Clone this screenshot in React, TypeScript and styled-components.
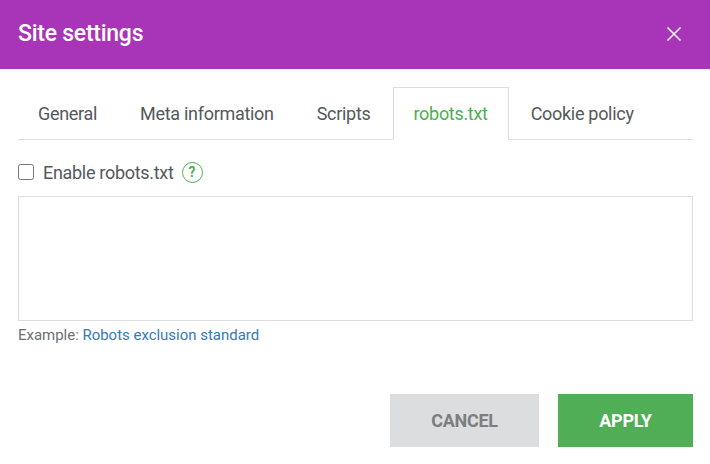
import React from "react";
import styled, { createGlobalStyle } from "styled-components";

const Global = createGlobalStyle`
  html, body { margin: 0; padding: 0; background: #fff; }
  body { font-family: Roboto, "Liberation Sans", sans-serif; }
  * { box-sizing: border-box; }
`;
const Dialog = styled.div`width: 710px; height: 464px; background: #fff; display: flex; flex-direction: column;`;
const Header = styled.header`height: 69px; background: #a835b8; color: #fff; display: flex; align-items: center; justify-content: space-between; padding: 0 28px 2px 18px;`;
const Title = styled.h1`margin: 0; font-size: 23px; font-weight: 500; line-height: 28px; letter-spacing: -0.25px;`;
const Close = styled.button`border: 0; background: none; padding: 0; width: 16px; height: 16px; display: block; color: #fff;`;
const Body = styled.div`flex: 1; padding: 18px 17px 17px 18px; display: flex; flex-direction: column;`;
const Tabs = styled.div`display: flex; align-items: flex-start; height: 53px; border-bottom: 1px solid #ddd;`;
const Tab = styled.div<{ $active?: boolean }>`
  height: ${p => (p.$active ? 53 : 52)}px; padding: 0 20px 0 19px; margin-right: 2px; font-size: 18px; letter-spacing: -0.3px; line-height: 52px; white-space: nowrap;
  color: ${p => (p.$active ? "#4caf50" : "#54585c")};
  background: ${p => (p.$active ? "#fff" : "transparent")};
  border: 1px solid ${p => (p.$active ? "#ddd" : "transparent")};
  border-bottom: ${p => (p.$active ? "1px solid #fff" : "0")};
`;
const CheckRow = styled.label`display: flex; align-items: center; margin-top: 20px; height: 24px; font-size: 18px; letter-spacing: -0.3px; color: #54585c;`;
const Box = styled.span`width: 16px; height: 16px; border: 1px solid #767676; border-radius: 2.5px; margin-right: 9px; background: #fff;`;
const Help = styled.span`width: 21px; height: 21px; margin-left: 8px; border: 1px solid #4caf50; border-radius: 50%; color: #4caf50; font-size: 14px; font-weight: 700; letter-spacing: 0; display: flex; align-items: center; justify-content: center;`;
const Area = styled.div`height: 125px; margin-top: 12px; border: 1px solid #ddd; background: #fff;`;
const Example = styled.div`margin-top: 5px; font-size: 14.96px; line-height: 18px; color: #6b6f73;`;
const Link = styled.a`color: #337ab7; text-decoration: none;`;
const Footer = styled.div`margin-top: auto; display: flex; justify-content: flex-end; gap: 19px;`;
const Button = styled.button<{ $primary?: boolean }>`
  width: ${p => (p.$primary ? 135 : 149)}px; height: 53px; border: 0; font: 700 18px Roboto, sans-serif; letter-spacing: -0.3px; text-transform: uppercase;
  background: ${p => (p.$primary ? "#4fae56" : "#dcdddf")};
  color: ${p => (p.$primary ? "#fff" : "#7b7e82")};
`;

export default function App() {
  return (
    <Dialog>
      <Global />
      <Header>
        <Title>Site settings</Title>
        <Close aria-label="Close">
          <svg viewBox="0 0 16 16" width="16" height="16" fill="none" stroke="currentColor" strokeWidth="1.5"><path d="M1.5 1.5l13 13M14.5 1.5l-13 13" /></svg>
        </Close>
      </Header>
      <Body>
        <Tabs>
          <Tab>General</Tab>
          <Tab>Meta information</Tab>
          <Tab>Scripts</Tab>
          <Tab $active>robots.txt</Tab>
          <Tab>Cookie policy</Tab>
        </Tabs>
        <CheckRow><Box />Enable robots.txt<Help>?</Help></CheckRow>
        <Area />
        <Example>Example: <Link href="#">Robots exclusion standard</Link></Example>
        <Footer>
          <Button>Cancel</Button>
          <Button $primary>Apply</Button>
        </Footer>
      </Body>
    </Dialog>
  );
}
